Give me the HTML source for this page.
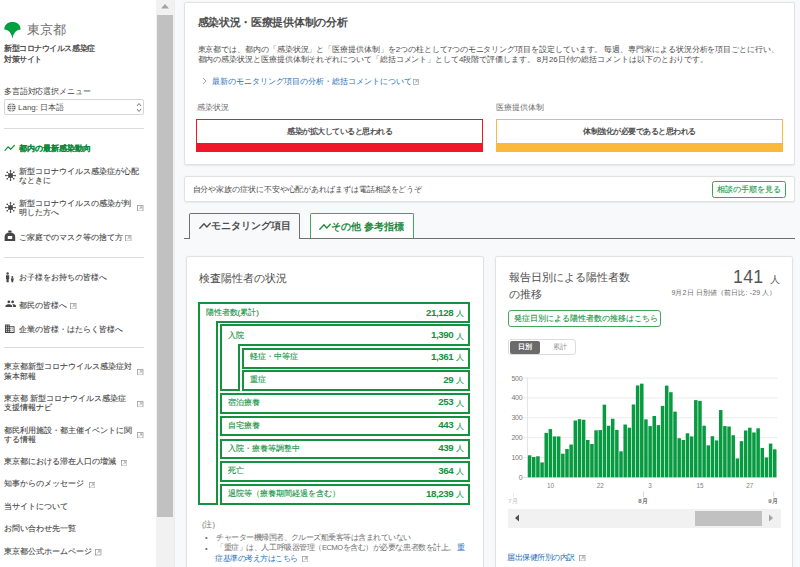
<!DOCTYPE html>
<html lang="ja"><head><meta charset="utf-8"><style>
*{box-sizing:border-box;margin:0;padding:0}
html,body{width:800px;height:567px;overflow:hidden;background:#f8f9fa;font-family:"Liberation Sans",sans-serif;color:#4d4d4d}
.a{position:absolute;white-space:nowrap}
.ic{position:absolute}
.nav{position:absolute;left:19px;font-size:8px;line-height:9px;color:#5f5f5f;white-space:nowrap;-webkit-text-stroke:0.1px currentColor}
.dv{position:absolute;left:4px;width:140px;height:1px;background:#dcdcdc}
.card{position:absolute;background:#fff;border:1px solid #e2e2e2;border-radius:2.5px;box-shadow:0 0.5px 1.5px rgba(0,0,0,.07)}
.bx{position:absolute;border:2px solid #0a8a3a}
.lab{position:absolute;font-size:8px;line-height:10px;color:#14923f;white-space:nowrap;-webkit-text-stroke:0.1px currentColor}
.val{position:absolute;right:0;font-size:9.3px;line-height:10px;color:#0a8a3a;font-weight:bold;white-space:nowrap;text-align:right}
.val span{font-weight:normal;font-size:8px;margin-left:3px}
.bar{position:absolute;background:#089a40}
</style></head><body>
<div class="a" style="left:0;top:0;width:156px;height:567px;background:#fff"></div>
<svg class="ic" style="left:3px;top:21px" width="20" height="19" viewBox="0 0 20 19"><path d="M1.3,8.6 C1.3,3.6 5,1.1 9.5,1.1 C14,1.1 17.6,3.6 17.6,8.6 C14,8.9 11,11 9.5,17.4 C8,11 5,8.9 1.3,8.6 Z" fill="#00a040"/></svg>
<div class="a" style="left:26.8px;top:22px;font-size:13.3px;line-height:16px;color:#707070;letter-spacing:0.3px">東京都</div>
<div class="a" style="left:4px;top:44.2px;font-size:7.6px;line-height:10px;color:#4d4d4d;font-weight:bold;letter-spacing:-0.45px">新型コロナウイルス感染症</div>
<div class="a" style="left:4px;top:54.8px;font-size:7.6px;line-height:10px;color:#4d4d4d;font-weight:bold;letter-spacing:-0.45px">対策サイト</div>
<div class="a" style="left:4px;top:87.2px;font-size:8px;line-height:10px;color:#3d3d3d;letter-spacing:-0.15px">多言語対応選択メニュー</div>
<div class="a" style="left:4px;top:99px;width:140px;height:16px;border:1px solid #d6d6d6;border-radius:2px;background:#fff"></div>
<svg class="ic" style="left:7px;top:103px" width="9" height="9" viewBox="0 0 9 9"><circle cx="4.5" cy="4.5" r="4" fill="#555"/><path d="M0.5,4.5H8.5M1,2.5H8M1,6.5H8M4.5,0.5V8.5" stroke="#fff" stroke-width="0.7"/><ellipse cx="4.5" cy="4.5" rx="1.8" ry="4" fill="none" stroke="#fff" stroke-width="0.7"/></svg>
<div class="a" style="left:18px;top:103px;font-size:8px;line-height:10px;color:#4d4d4d">Lang: 日本語</div>
<svg class="ic" style="left:136px;top:102px" width="6" height="11" viewBox="0 0 6 11"><path d="M1,4 L3,1.5 L5,4 M1,7 L3,9.5 L5,7" fill="none" stroke="#666" stroke-width="0.9"/></svg>
<div class="dv" style="top:128px"></div>
<svg class="ic" style="left:4px;top:144px" width="11" height="8" viewBox="0 0 11 8"><path d="M1,6.3 L4,2.8 L6.6,5.3 L10.3,1.5" fill="none" stroke="#14923f" stroke-width="1.2" stroke-linecap="round" stroke-linejoin="round"/></svg>
<div class="nav" style="left:19px;top:144.1px;line-height:10px;color:#0a8a3a;letter-spacing:0px;font-weight:bold;">都内の最新感染動向</div>
<svg class="ic" style="left:4.6px;top:169.9px" width="11" height="11" viewBox="0 0 11 11"><circle cx="5.5" cy="5.5" r="2.5" fill="#4a4a4a"/><line x1="5.50" y1="3.50" x2="5.50" y2="1.10" stroke="#4a4a4a" stroke-width="0.75"/><circle cx="5.50" cy="0.90" r="0.85" fill="#4a4a4a"/><line x1="6.91" y1="4.09" x2="8.61" y2="2.39" stroke="#4a4a4a" stroke-width="0.75"/><circle cx="8.75" cy="2.25" r="0.85" fill="#4a4a4a"/><line x1="7.50" y1="5.50" x2="9.90" y2="5.50" stroke="#4a4a4a" stroke-width="0.75"/><circle cx="10.10" cy="5.50" r="0.85" fill="#4a4a4a"/><line x1="6.91" y1="6.91" x2="8.61" y2="8.61" stroke="#4a4a4a" stroke-width="0.75"/><circle cx="8.75" cy="8.75" r="0.85" fill="#4a4a4a"/><line x1="5.50" y1="7.50" x2="5.50" y2="9.90" stroke="#4a4a4a" stroke-width="0.75"/><circle cx="5.50" cy="10.10" r="0.85" fill="#4a4a4a"/><line x1="4.09" y1="6.91" x2="2.39" y2="8.61" stroke="#4a4a4a" stroke-width="0.75"/><circle cx="2.25" cy="8.75" r="0.85" fill="#4a4a4a"/><line x1="3.50" y1="5.50" x2="1.10" y2="5.50" stroke="#4a4a4a" stroke-width="0.75"/><circle cx="0.90" cy="5.50" r="0.85" fill="#4a4a4a"/><line x1="4.09" y1="4.09" x2="2.39" y2="2.39" stroke="#4a4a4a" stroke-width="0.75"/><circle cx="2.25" cy="2.25" r="0.85" fill="#4a4a4a"/></svg>
<div class="nav" style="left:19px;top:167.2px;line-height:10px;color:#454545;letter-spacing:0px;">新型コロナウイルス感染症が心配</div>
<div class="nav" style="left:19px;top:176.1px;line-height:10px;color:#454545;letter-spacing:0px;">なときに</div>
<svg class="ic" style="left:4.5px;top:201.7px" width="11" height="11" viewBox="0 0 11 11"><circle cx="5.5" cy="5.5" r="2.5" fill="#4a4a4a"/><line x1="5.50" y1="3.50" x2="5.50" y2="1.10" stroke="#4a4a4a" stroke-width="0.75"/><circle cx="5.50" cy="0.90" r="0.85" fill="#4a4a4a"/><line x1="6.91" y1="4.09" x2="8.61" y2="2.39" stroke="#4a4a4a" stroke-width="0.75"/><circle cx="8.75" cy="2.25" r="0.85" fill="#4a4a4a"/><line x1="7.50" y1="5.50" x2="9.90" y2="5.50" stroke="#4a4a4a" stroke-width="0.75"/><circle cx="10.10" cy="5.50" r="0.85" fill="#4a4a4a"/><line x1="6.91" y1="6.91" x2="8.61" y2="8.61" stroke="#4a4a4a" stroke-width="0.75"/><circle cx="8.75" cy="8.75" r="0.85" fill="#4a4a4a"/><line x1="5.50" y1="7.50" x2="5.50" y2="9.90" stroke="#4a4a4a" stroke-width="0.75"/><circle cx="5.50" cy="10.10" r="0.85" fill="#4a4a4a"/><line x1="4.09" y1="6.91" x2="2.39" y2="8.61" stroke="#4a4a4a" stroke-width="0.75"/><circle cx="2.25" cy="8.75" r="0.85" fill="#4a4a4a"/><line x1="3.50" y1="5.50" x2="1.10" y2="5.50" stroke="#4a4a4a" stroke-width="0.75"/><circle cx="0.90" cy="5.50" r="0.85" fill="#4a4a4a"/><line x1="4.09" y1="4.09" x2="2.39" y2="2.39" stroke="#4a4a4a" stroke-width="0.75"/><circle cx="2.25" cy="2.25" r="0.85" fill="#4a4a4a"/></svg>
<div class="nav" style="left:19px;top:198.8px;line-height:10px;color:#454545;letter-spacing:0px;">新型コロナウイルスの感染が判</div>
<div class="nav" style="left:19px;top:207.8px;line-height:10px;color:#454545;letter-spacing:0px;">明した方へ</div>
<svg class="ic" style="left:137px;top:204.8px" width="6.5" height="6.5" viewBox="0 0 7 7"><rect x="0.55" y="0.55" width="5.9" height="5.9" fill="none" stroke="#a0a0a0" stroke-width="0.9"/><path d="M2.3,4.7 L5,2 M3.1,1.9 H5.1 V3.9" fill="none" stroke="#a0a0a0" stroke-width="0.85"/></svg>
<svg class="ic" style="left:4px;top:230px" width="12" height="12" viewBox="0 0 12 12"><rect x="4.1" y="0.5" width="3.6" height="2" rx="0.9" fill="#454545"/><path d="M0.6,10.9 V7 Q0.6,2.4 5.9,2.4 Q11.2,2.4 11.2,7 V10.9Z" fill="#454545"/><rect x="3.8" y="6" width="4.4" height="3" fill="#fff"/></svg>
<div class="nav" style="left:19px;top:232.5px;line-height:10px;color:#454545;letter-spacing:0px;">ご家庭でのマスク等の捨て方</div>
<svg class="ic" style="left:125px;top:234.8px" width="6.5" height="6.5" viewBox="0 0 7 7"><rect x="0.55" y="0.55" width="5.9" height="5.9" fill="none" stroke="#a0a0a0" stroke-width="0.9"/><path d="M2.3,4.7 L5,2 M3.1,1.9 H5.1 V3.9" fill="none" stroke="#a0a0a0" stroke-width="0.85"/></svg>
<div class="dv" style="top:257px"></div>
<svg class="ic" style="left:5px;top:272px" width="10" height="11" viewBox="0 0 10 11"><circle cx="2.6" cy="1.5" r="1.2" fill="#454545"/><path d="M1,3.2 H4.2 V7 H3.7 V10.3 H1.5 V7 H1Z" fill="#454545"/><circle cx="7.3" cy="5" r="0.95" fill="#454545"/><path d="M6,6.3 H8.6 V8.6 H8.2 V10.3 H6.4 V8.6 H6Z" fill="#454545"/></svg>
<div class="nav" style="left:19px;top:273.4px;line-height:10px;color:#454545;letter-spacing:0px;">お子様をお持ちの皆様へ</div>
<svg class="ic" style="left:4.5px;top:297.8px" width="11.5" height="11.5" viewBox="0 0 24 24"><path d="M16 11c1.66 0 2.99-1.34 2.99-3S17.66 5 16 5c-1.66 0-3 1.34-3 3s1.34 3 3 3zm-8 0c1.66 0 2.99-1.34 2.99-3S9.66 5 8 5C6.34 5 5 6.34 5 8s1.34 3 3 3zm0 2c-2.33 0-7 1.170-7 3.5V19h14v-2.5c0-2.330-4.67-3.5-7-3.5zm8 0c-.29 0-.62.02-.97.05 1.16.84 1.970 1.970 1.970 3.45V19h6v-2.5c0-2.33-4.67-3.5-7-3.5z" fill="#454545"/></svg>
<div class="nav" style="left:19px;top:300.7px;line-height:10px;color:#454545;letter-spacing:0px;">都民の皆様へ</div>
<svg class="ic" style="left:70px;top:302.8px" width="6.5" height="6.5" viewBox="0 0 7 7"><rect x="0.55" y="0.55" width="5.9" height="5.9" fill="none" stroke="#a0a0a0" stroke-width="0.9"/><path d="M2.3,4.7 L5,2 M3.1,1.9 H5.1 V3.9" fill="none" stroke="#a0a0a0" stroke-width="0.85"/></svg>
<svg class="ic" style="left:4px;top:322.6px" width="11.5" height="11.5" viewBox="0 0 24 24"><path d="M12 7V3H2v18h20V7H12zM6 19H4v-2h2v2zm0-4H4v-2h2v2zm0-4H4V9h2v2zm0-4H4V5h2v2zm4 12H8v-2h2v2zm0-4H8v-2h2v2zm0-4H8V9h2v2zm0-4H8V5h2v2zm10 12h-8v-2h2v-2h-2v-2h2v-2h-2V9h8v10zm-2-8h-2v2h2v-2zm0 4h-2v2h2v-2z" fill="#454545"/></svg>
<div class="nav" style="left:19px;top:325.3px;line-height:10px;color:#454545;letter-spacing:0px;">企業の皆様・はたらく皆様へ</div>
<div class="dv" style="top:347px"></div>
<div class="nav" style="left:4px;top:362.0px;line-height:10px;color:#454545;letter-spacing:0px;">東京都新型コロナウイルス感染症対</div>
<div class="nav" style="left:4px;top:371.5px;line-height:10px;color:#454545;letter-spacing:0px;">策本部報</div>
<svg class="ic" style="left:137px;top:368.8px" width="6.5" height="6.5" viewBox="0 0 7 7"><rect x="0.55" y="0.55" width="5.9" height="5.9" fill="none" stroke="#a0a0a0" stroke-width="0.9"/><path d="M2.3,4.7 L5,2 M3.1,1.9 H5.1 V3.9" fill="none" stroke="#a0a0a0" stroke-width="0.85"/></svg>
<div class="nav" style="left:4px;top:393.8px;line-height:10px;color:#454545;letter-spacing:0px;">東京都 新型コロナウイルス感染症</div>
<div class="nav" style="left:4px;top:403.3px;line-height:10px;color:#454545;letter-spacing:0px;">支援情報ナビ</div>
<svg class="ic" style="left:137px;top:400.8px" width="6.5" height="6.5" viewBox="0 0 7 7"><rect x="0.55" y="0.55" width="5.9" height="5.9" fill="none" stroke="#a0a0a0" stroke-width="0.9"/><path d="M2.3,4.7 L5,2 M3.1,1.9 H5.1 V3.9" fill="none" stroke="#a0a0a0" stroke-width="0.85"/></svg>
<div class="nav" style="left:4px;top:425.6px;line-height:10px;color:#454545;letter-spacing:0px;">都民利用施設・都主催イベントに関</div>
<div class="nav" style="left:4px;top:435.0px;line-height:10px;color:#454545;letter-spacing:0px;">する情報</div>
<svg class="ic" style="left:137px;top:431.8px" width="6.5" height="6.5" viewBox="0 0 7 7"><rect x="0.55" y="0.55" width="5.9" height="5.9" fill="none" stroke="#a0a0a0" stroke-width="0.9"/><path d="M2.3,4.7 L5,2 M3.1,1.9 H5.1 V3.9" fill="none" stroke="#a0a0a0" stroke-width="0.85"/></svg>
<div class="nav" style="left:4px;top:456.9px;line-height:10px;color:#454545;letter-spacing:0px;">東京都における滞在人口の増減</div>
<svg class="ic" style="left:120.5px;top:459.8px" width="6.5" height="6.5" viewBox="0 0 7 7"><rect x="0.55" y="0.55" width="5.9" height="5.9" fill="none" stroke="#a0a0a0" stroke-width="0.9"/><path d="M2.3,4.7 L5,2 M3.1,1.9 H5.1 V3.9" fill="none" stroke="#a0a0a0" stroke-width="0.85"/></svg>
<div class="nav" style="left:4px;top:479.4px;line-height:10px;color:#454545;letter-spacing:0px;">知事からのメッセージ</div>
<svg class="ic" style="left:88.5px;top:481.8px" width="6.5" height="6.5" viewBox="0 0 7 7"><rect x="0.55" y="0.55" width="5.9" height="5.9" fill="none" stroke="#a0a0a0" stroke-width="0.9"/><path d="M2.3,4.7 L5,2 M3.1,1.9 H5.1 V3.9" fill="none" stroke="#a0a0a0" stroke-width="0.85"/></svg>
<div class="nav" style="left:4px;top:501.5px;line-height:10px;color:#454545;letter-spacing:0px;">当サイトについて</div>
<div class="nav" style="left:4px;top:524.3px;line-height:10px;color:#454545;letter-spacing:0px;">お問い合わせ先一覧</div>
<div class="nav" style="left:4px;top:547.4px;line-height:10px;color:#454545;letter-spacing:0px;">東京都公式ホームページ</div>
<svg class="ic" style="left:95px;top:549.3px" width="6.5" height="6.5" viewBox="0 0 7 7"><rect x="0.55" y="0.55" width="5.9" height="5.9" fill="none" stroke="#a0a0a0" stroke-width="0.9"/><path d="M2.3,4.7 L5,2 M3.1,1.9 H5.1 V3.9" fill="none" stroke="#a0a0a0" stroke-width="0.85"/></svg>
<div class="a" style="left:156px;top:0;width:18px;height:567px;background:#f1f1f1"></div>
<svg class="ic" style="left:160px;top:3px" width="10" height="6" viewBox="0 0 10 6"><path d="M1,5.5 L5,1 L9,5.5Z" fill="#a3a3a3"/></svg>
<div class="a" style="left:157px;top:15px;width:16px;height:502px;background:#c1c1c1"></div>
<div class="a" style="left:174px;top:0;width:1px;height:567px;background:#ececec"></div>
<div class="card" style="left:184px;top:2px;width:611px;height:163px"></div>
<div class="a" style="left:197.5px;top:15.5px;font-size:10.7px;line-height:12px;color:#4d4d4d;font-weight:bold;letter-spacing:-0.3px">感染状況・医療提供体制の分析</div>
<div class="a" style="left:197.5px;top:45px;font-size:7.88px;line-height:10.1px;color:#4d4d4d;letter-spacing:-0.075px">東京都では、都内の「感染状況」と「医療提供体制」を2つの柱として7つのモニタリング項目を設定しています。 毎週、専門家による状況分析を項目ごとに行い、<br>都内の感染状況と医療提供体制それぞれについて「総括コメント」として4段階で評価します。 8月26日付の総括コメントは以下のとおりです。</div>
<svg class="ic" style="left:202px;top:77px" width="5" height="8" viewBox="0 0 5 8"><path d="M1,1 L4,4 L1,7" fill="none" stroke="#9a9a9a" stroke-width="0.9"/></svg>
<div class="a" style="left:212.4px;top:77px;font-size:8px;line-height:10px;color:#1d6fb8">最新のモニタリング項目の分析・総括コメントについて</div>
<svg class="ic" style="left:413px;top:79.39999999999999px" width="5.8" height="5.8" viewBox="0 0 7 7"><rect x="0.55" y="0.55" width="5.9" height="5.9" fill="none" stroke="#a0a0a0" stroke-width="0.9"/><path d="M2.3,4.7 L5,2 M3.1,1.9 H5.1 V3.9" fill="none" stroke="#a0a0a0" stroke-width="0.85"/></svg>
<div class="a" style="left:197px;top:103px;font-size:7.8px;line-height:10px;color:#6b6b6b">感染状況</div>
<div class="a" style="left:496px;top:103px;font-size:7.8px;line-height:10px;color:#6b6b6b">医療提供体制</div>
<div class="a" style="left:196px;top:119px;width:287px;height:33px;border:1px solid #f01828;background:#fff"></div>
<div class="a" style="left:196px;top:142.5px;width:287px;height:9px;background:#f01828"></div>
<div class="a" style="left:196px;top:127px;width:287px;text-align:center;font-size:7.5px;line-height:10px;color:#4d4d4d;font-weight:bold;letter-spacing:-0.5px">感染が拡大していると思われる</div>
<div class="a" style="left:496px;top:119px;width:287px;height:33px;border:1px solid #fbb93c;background:#fff"></div>
<div class="a" style="left:496px;top:142.5px;width:287px;height:9px;background:#fbb93c"></div>
<div class="a" style="left:496px;top:127px;width:287px;text-align:center;font-size:7.5px;line-height:10px;color:#4d4d4d;font-weight:bold;letter-spacing:-0.5px">体制強化が必要であると思われる</div>
<div class="card" style="left:184px;top:176px;width:611px;height:26px"></div>
<div class="a" style="left:192.5px;top:185px;font-size:7.8px;line-height:10px;color:#4d4d4d;letter-spacing:-0.08px">自分や家族の症状に不安や心配があればまずは電話相談をどうぞ</div>
<div class="a" style="left:712px;top:181px;width:74px;height:17px;border:1px solid #3aa35a;border-radius:2.5px;background:#fff"></div>
<div class="a" style="left:712px;top:184.5px;width:74px;text-align:center;font-size:7.5px;line-height:10px;color:#209a4a;-webkit-text-stroke:0.1px currentColor">相談の手順を見る</div>
<div class="a" style="left:184px;top:237.5px;width:611px;height:1px;background:#707070"></div>
<div class="a" style="left:189px;top:212.5px;width:111px;height:26px;border:1px solid #707070;border-bottom:none;border-radius:2px 2px 0 0;background:#f8f9fa"></div>
<svg class="ic" style="left:199px;top:221.5px" width="12" height="8" viewBox="0 0 12 8"><path d="M0.8,6.2 L5,1.8 L7.8,5 L11.3,1.3" fill="none" stroke="#4d4d4d" stroke-width="1.3" stroke-linecap="round" stroke-linejoin="round"/></svg>
<div class="a" style="left:211px;top:219.5px;font-size:9.6px;line-height:12px;color:#4d4d4d;font-weight:bold">モニタリング項目</div>
<div class="a" style="left:309.5px;top:212.5px;width:104px;height:25px;border:1px solid #43a560;border-bottom:none;border-radius:2px 2px 0 0;background:#fff"></div>
<svg class="ic" style="left:319px;top:222.5px" width="12" height="8" viewBox="0 0 12 8"><path d="M0.8,6.2 L5,1.8 L7.8,5 L11.3,1.3" fill="none" stroke="#1a8a40" stroke-width="1.3" stroke-linecap="round" stroke-linejoin="round"/></svg>
<div class="a" style="left:331px;top:220.5px;font-size:9.6px;line-height:12px;color:#1a8a40;font-weight:bold">その他 参考指標</div>
<div class="card" style="left:186px;top:256px;width:298px;height:330px"></div>
<div class="a" style="left:198.5px;top:271.8px;font-size:11.2px;line-height:13px;color:#4d4d4d">検査陽性者の状況</div>
<div class="a" style="left:198px;top:302px;width:20px;height:203px;border-top:none;border-left:2px solid #14923f;border-right:none;border-bottom:2px solid #14923f;"></div>
<div class="a" style="left:216px;top:321px;width:254px;height:184px;border-top:2px solid #14923f;border-left:2px solid #14923f;border-right:none;border-bottom:none;"></div>
<div class="a" style="left:220px;top:324px;width:20px;height:67px;border-top:none;border-left:2px solid #14923f;border-right:none;border-bottom:2px solid #14923f;"></div>
<div class="a" style="left:238px;top:344px;width:232px;height:47px;border-top:2px solid #14923f;border-left:2px solid #14923f;border-right:none;border-bottom:none;"></div>
<div class="a" style="left:198px;top:302px;width:272px;height:21px;border-top:2px solid #14923f;border-left:2px solid #14923f;border-right:2px solid #14923f;border-bottom:none;"></div>
<div class="lab" style="left:205.5px;top:308.0px">陽性者数(累計)</div>
<div class="a" style="left:300px;width:153.2px;top:307.5px;text-align:right;font-size:9.7px;line-height:10px;color:#14923f;font-weight:bold;letter-spacing:-0.4px">21,128</div>
<div class="a" style="left:455.5px;top:308.6px;font-size:8px;line-height:10px;color:#14923f">人</div>
<div class="a" style="left:220px;top:324px;width:250px;height:22px;border-top:2px solid #14923f;border-left:2px solid #14923f;border-right:2px solid #14923f;border-bottom:none;"></div>
<div class="lab" style="left:227.5px;top:330.9px">入院</div>
<div class="a" style="left:300px;width:153.2px;top:330.4px;text-align:right;font-size:9.7px;line-height:10px;color:#14923f;font-weight:bold;letter-spacing:-0.4px">1,390</div>
<div class="a" style="left:455.5px;top:331.5px;font-size:8px;line-height:10px;color:#14923f">人</div>
<div class="a" style="left:242px;top:348px;width:228px;height:21px;border-top:2px solid #14923f;border-left:2px solid #14923f;border-right:2px solid #14923f;border-bottom:2px solid #14923f;"></div>
<div class="lab" style="left:249.5px;top:352.4px">軽症・中等症</div>
<div class="a" style="left:300px;width:153.2px;top:351.9px;text-align:right;font-size:9.7px;line-height:10px;color:#14923f;font-weight:bold;letter-spacing:-0.4px">1,361</div>
<div class="a" style="left:455.5px;top:353.0px;font-size:8px;line-height:10px;color:#14923f">人</div>
<div class="a" style="left:242px;top:370px;width:228px;height:21px;border-top:2px solid #14923f;border-left:2px solid #14923f;border-right:2px solid #14923f;border-bottom:2px solid #14923f;"></div>
<div class="lab" style="left:249.5px;top:375.3px">重症</div>
<div class="a" style="left:300px;width:153.2px;top:374.8px;text-align:right;font-size:9.7px;line-height:10px;color:#14923f;font-weight:bold;letter-spacing:-0.4px">29</div>
<div class="a" style="left:455.5px;top:375.9px;font-size:8px;line-height:10px;color:#14923f">人</div>
<div class="a" style="left:220px;top:393px;width:250px;height:21px;border-top:2px solid #14923f;border-left:2px solid #14923f;border-right:2px solid #14923f;border-bottom:2px solid #14923f;"></div>
<div class="lab" style="left:227.5px;top:397.9px">宿泊療養</div>
<div class="a" style="left:300px;width:153.2px;top:397.4px;text-align:right;font-size:9.7px;line-height:10px;color:#14923f;font-weight:bold;letter-spacing:-0.4px">253</div>
<div class="a" style="left:455.5px;top:398.5px;font-size:8px;line-height:10px;color:#14923f">人</div>
<div class="a" style="left:220px;top:416px;width:250px;height:20px;border-top:2px solid #14923f;border-left:2px solid #14923f;border-right:2px solid #14923f;border-bottom:2px solid #14923f;"></div>
<div class="lab" style="left:227.5px;top:420.9px">自宅療養</div>
<div class="a" style="left:300px;width:153.2px;top:420.4px;text-align:right;font-size:9.7px;line-height:10px;color:#14923f;font-weight:bold;letter-spacing:-0.4px">443</div>
<div class="a" style="left:455.5px;top:421.5px;font-size:8px;line-height:10px;color:#14923f">人</div>
<div class="a" style="left:220px;top:439px;width:250px;height:20px;border-top:2px solid #14923f;border-left:2px solid #14923f;border-right:2px solid #14923f;border-bottom:2px solid #14923f;"></div>
<div class="lab" style="left:227.5px;top:443.8px">入院・療養等調整中</div>
<div class="a" style="left:300px;width:153.2px;top:443.3px;text-align:right;font-size:9.7px;line-height:10px;color:#14923f;font-weight:bold;letter-spacing:-0.4px">439</div>
<div class="a" style="left:455.5px;top:444.4px;font-size:8px;line-height:10px;color:#14923f">人</div>
<div class="a" style="left:220px;top:461px;width:250px;height:21px;border-top:2px solid #14923f;border-left:2px solid #14923f;border-right:2px solid #14923f;border-bottom:2px solid #14923f;"></div>
<div class="lab" style="left:227.5px;top:466.4px">死亡</div>
<div class="a" style="left:300px;width:153.2px;top:465.9px;text-align:right;font-size:9.7px;line-height:10px;color:#14923f;font-weight:bold;letter-spacing:-0.4px">364</div>
<div class="a" style="left:455.5px;top:467.0px;font-size:8px;line-height:10px;color:#14923f">人</div>
<div class="a" style="left:220px;top:484px;width:250px;height:21px;border-top:2px solid #14923f;border-left:2px solid #14923f;border-right:2px solid #14923f;border-bottom:2px solid #14923f;"></div>
<div class="lab" style="left:227.5px;top:489.4px">退院等（療養期間経過を含む）</div>
<div class="a" style="left:300px;width:153.2px;top:488.9px;text-align:right;font-size:9.7px;line-height:10px;color:#14923f;font-weight:bold;letter-spacing:-0.4px">18,239</div>
<div class="a" style="left:455.5px;top:490.0px;font-size:8px;line-height:10px;color:#14923f">人</div>
<div class="a" style="left:202px;top:519.5px;font-size:7.5px;line-height:10px;color:#707070">(注)</div>
<div class="a" style="left:205px;top:532px;font-size:7.5px;line-height:11px;color:#707070">•<br>•</div>
<div class="a" style="left:216.2px;top:532px;font-size:7.5px;line-height:11px;color:#707070;letter-spacing:-0.52px">チャーター機帰国者、クルーズ船乗客等は含まれていない</div>
<div class="a" style="left:216.2px;top:541.5px;font-size:7.5px;line-height:11px;color:#707070;letter-spacing:-0.45px">「重症」は、人工呼吸器管理（ECMOを含む）が必要な患者数を計上。 <span style="color:#1d6fb8">重</span></div>
<div class="a" style="left:215.4px;top:552.7px;font-size:7.5px;line-height:11px;color:#1d6fb8;letter-spacing:-0.54px">症基準の考え方はこちら</div>
<svg class="ic" style="left:301.5px;top:555.8px" width="6.5" height="6.5" viewBox="0 0 7 7"><rect x="0.55" y="0.55" width="5.9" height="5.9" fill="none" stroke="#a0a0a0" stroke-width="0.9"/><path d="M2.3,4.7 L5,2 M3.1,1.9 H5.1 V3.9" fill="none" stroke="#a0a0a0" stroke-width="0.85"/></svg>
<div class="card" style="left:495px;top:256px;width:298px;height:330px"></div>
<div class="a" style="left:508.5px;top:268.6px;font-size:11.2px;line-height:17px;color:#4d4d4d">報告日別による陽性者数<br>の推移</div>
<div class="a" style="left:700px;width:63.5px;top:266.8px;text-align:right;font-size:17.7px;line-height:20px;color:#555;letter-spacing:0.3px">141</div>
<div class="a" style="left:770px;top:273.5px;font-size:9.6px;line-height:12px;color:#5a5a5a">人</div>
<div class="a" style="left:600px;width:176.5px;top:288px;text-align:right;font-size:7px;line-height:9px;color:#6a6a6a;letter-spacing:0.12px">9月2日 日別値（前日比: -29 人）</div>
<div class="a" style="left:508px;top:310px;width:153px;height:17px;border:1px solid #43a560;border-radius:3px;background:#fff"></div>
<div class="a" style="left:513.5px;top:314.3px;font-size:7.8px;line-height:10px;color:#159541;-webkit-text-stroke:0.1px currentColor">発症日別による陽性者数の推移はこちら</div>
<div class="a" style="left:508px;top:339px;width:68px;height:16px;border:1px solid #dcdcdc;border-radius:3px;background:#fff"></div>
<div class="a" style="left:510px;top:341px;width:30px;height:12.5px;border-radius:2px;background:#6b6b6b"></div>
<div class="a" style="left:510px;top:342px;width:30px;text-align:center;font-size:7.3px;line-height:10px;color:#fff;font-weight:bold">日別</div>
<div class="a" style="left:545px;top:342px;width:30px;text-align:center;font-size:7.3px;line-height:10px;color:#8a8a8a">累計</div>
<svg class="ic" style="left:0;top:0" width="800" height="567" viewBox="0 0 800 567"><rect x="522.5" y="456.96" width="255" height="1" fill="#ebebeb"/><rect x="522.5" y="437.12" width="255" height="1" fill="#ebebeb"/><rect x="522.5" y="417.28" width="255" height="1" fill="#ebebeb"/><rect x="522.5" y="397.44" width="255" height="1" fill="#ebebeb"/><rect x="522.5" y="377.60" width="255" height="1" fill="#ebebeb"/><rect x="522.5" y="476.80" width="255" height="1" fill="#dedede"/><rect x="527" y="377.8" width="1" height="100" fill="#e6e6e6"/><rect x="527.85" y="455.28" width="3.5" height="22.02" fill="#089a40"/><rect x="532.00" y="457.06" width="3.5" height="20.24" fill="#089a40"/><rect x="536.16" y="456.27" width="3.5" height="21.03" fill="#089a40"/><rect x="540.32" y="462.42" width="3.5" height="14.88" fill="#089a40"/><rect x="544.47" y="432.86" width="3.5" height="44.44" fill="#089a40"/><rect x="548.62" y="429.09" width="3.5" height="48.21" fill="#089a40"/><rect x="552.78" y="436.43" width="3.5" height="40.87" fill="#089a40"/><rect x="556.94" y="436.43" width="3.5" height="40.87" fill="#089a40"/><rect x="561.09" y="453.69" width="3.5" height="23.61" fill="#089a40"/><rect x="565.25" y="448.93" width="3.5" height="28.37" fill="#089a40"/><rect x="569.40" y="444.56" width="3.5" height="32.74" fill="#089a40"/><rect x="573.56" y="420.56" width="3.5" height="56.74" fill="#089a40"/><rect x="577.71" y="419.17" width="3.5" height="58.13" fill="#089a40"/><rect x="581.87" y="419.76" width="3.5" height="57.54" fill="#089a40"/><rect x="586.02" y="440.00" width="3.5" height="37.30" fill="#089a40"/><rect x="590.18" y="443.97" width="3.5" height="33.33" fill="#089a40"/><rect x="594.33" y="430.28" width="3.5" height="47.02" fill="#089a40"/><rect x="598.49" y="430.08" width="3.5" height="47.22" fill="#089a40"/><rect x="602.64" y="404.69" width="3.5" height="72.61" fill="#089a40"/><rect x="606.80" y="425.72" width="3.5" height="51.58" fill="#089a40"/><rect x="610.95" y="418.77" width="3.5" height="58.53" fill="#089a40"/><rect x="615.11" y="429.88" width="3.5" height="47.42" fill="#089a40"/><rect x="619.26" y="451.31" width="3.5" height="25.99" fill="#089a40"/><rect x="623.42" y="424.53" width="3.5" height="52.77" fill="#089a40"/><rect x="627.57" y="427.70" width="3.5" height="49.60" fill="#089a40"/><rect x="631.73" y="404.49" width="3.5" height="72.81" fill="#089a40"/><rect x="635.88" y="385.44" width="3.5" height="91.86" fill="#089a40"/><rect x="640.04" y="383.66" width="3.5" height="93.64" fill="#089a40"/><rect x="644.19" y="419.37" width="3.5" height="57.93" fill="#089a40"/><rect x="648.35" y="426.11" width="3.5" height="51.19" fill="#089a40"/><rect x="652.50" y="415.99" width="3.5" height="61.31" fill="#089a40"/><rect x="656.65" y="425.12" width="3.5" height="52.18" fill="#089a40"/><rect x="660.81" y="405.88" width="3.5" height="71.42" fill="#089a40"/><rect x="664.97" y="385.64" width="3.5" height="91.66" fill="#089a40"/><rect x="669.12" y="392.19" width="3.5" height="85.11" fill="#089a40"/><rect x="673.28" y="411.63" width="3.5" height="65.67" fill="#089a40"/><rect x="677.43" y="438.22" width="3.5" height="39.08" fill="#089a40"/><rect x="681.59" y="440.00" width="3.5" height="37.30" fill="#089a40"/><rect x="685.74" y="433.26" width="3.5" height="44.04" fill="#089a40"/><rect x="689.89" y="436.43" width="3.5" height="40.87" fill="#089a40"/><rect x="694.05" y="400.12" width="3.5" height="77.18" fill="#089a40"/><rect x="698.21" y="400.92" width="3.5" height="76.38" fill="#089a40"/><rect x="702.36" y="425.72" width="3.5" height="51.58" fill="#089a40"/><rect x="706.52" y="445.36" width="3.5" height="31.94" fill="#089a40"/><rect x="710.67" y="436.23" width="3.5" height="41.07" fill="#089a40"/><rect x="714.83" y="440.40" width="3.5" height="36.90" fill="#089a40"/><rect x="718.98" y="410.04" width="3.5" height="67.26" fill="#089a40"/><rect x="723.13" y="426.11" width="3.5" height="51.19" fill="#089a40"/><rect x="727.29" y="426.51" width="3.5" height="50.79" fill="#089a40"/><rect x="731.45" y="435.24" width="3.5" height="42.06" fill="#089a40"/><rect x="735.60" y="458.45" width="3.5" height="18.85" fill="#089a40"/><rect x="739.75" y="441.19" width="3.5" height="36.11" fill="#089a40"/><rect x="743.91" y="430.48" width="3.5" height="46.82" fill="#089a40"/><rect x="748.07" y="427.70" width="3.5" height="49.60" fill="#089a40"/><rect x="752.22" y="432.46" width="3.5" height="44.84" fill="#089a40"/><rect x="756.38" y="428.30" width="3.5" height="49.00" fill="#089a40"/><rect x="760.53" y="447.94" width="3.5" height="29.36" fill="#089a40"/><rect x="764.69" y="457.46" width="3.5" height="19.84" fill="#089a40"/><rect x="768.84" y="443.57" width="3.5" height="33.73" fill="#089a40"/><rect x="773.00" y="449.33" width="3.5" height="27.97" fill="#089a40"/><rect x="513" y="491.5" width="0.8" height="5.5" fill="#e6e6e6"/><rect x="643.2" y="491.5" width="0.8" height="5.5" fill="#cfcfcf"/><rect x="773.4" y="491.5" width="0.8" height="5.5" fill="#cfcfcf"/></svg>
<div class="a" style="left:490px;width:32.5px;top:472.80px;text-align:right;font-size:7px;line-height:9px;color:#7a7a7a;letter-spacing:-0.2px">0</div>
<div class="a" style="left:490px;width:32.5px;top:452.96px;text-align:right;font-size:7px;line-height:9px;color:#7a7a7a;letter-spacing:-0.2px">100</div>
<div class="a" style="left:490px;width:32.5px;top:433.12px;text-align:right;font-size:7px;line-height:9px;color:#7a7a7a;letter-spacing:-0.2px">200</div>
<div class="a" style="left:490px;width:32.5px;top:413.28px;text-align:right;font-size:7px;line-height:9px;color:#7a7a7a;letter-spacing:-0.2px">300</div>
<div class="a" style="left:490px;width:32.5px;top:393.44px;text-align:right;font-size:7px;line-height:9px;color:#7a7a7a;letter-spacing:-0.2px">400</div>
<div class="a" style="left:490px;width:32.5px;top:373.60px;text-align:right;font-size:7px;line-height:9px;color:#7a7a7a;letter-spacing:-0.2px">500</div>
<div class="a" style="left:540.4px;width:20px;top:481.5px;text-align:center;font-size:6.3px;line-height:8px;color:#808080">10</div>
<div class="a" style="left:590.2px;width:20px;top:481.5px;text-align:center;font-size:6.3px;line-height:8px;color:#808080">22</div>
<div class="a" style="left:640.1px;width:20px;top:481.5px;text-align:center;font-size:6.3px;line-height:8px;color:#808080">3</div>
<div class="a" style="left:690.0px;width:20px;top:481.5px;text-align:center;font-size:6.3px;line-height:8px;color:#808080">15</div>
<div class="a" style="left:739.8px;width:20px;top:481.5px;text-align:center;font-size:6.3px;line-height:8px;color:#808080">27</div>
<div class="a" style="left:503px;width:20px;top:497px;text-align:center;font-size:6px;line-height:8px;color:#d0d0d0;font-weight:bold">7月</div>
<div class="a" style="left:633px;width:20px;top:497px;text-align:center;font-size:6px;line-height:8px;color:#707070;font-weight:bold">8月</div>
<div class="a" style="left:763px;width:20px;top:497px;text-align:center;font-size:6px;line-height:8px;color:#707070;font-weight:bold">9月</div>
<div class="a" style="left:508px;top:509px;width:272.5px;height:18.5px;background:#f1f1f1"></div>
<svg class="ic" style="left:514px;top:514px" width="6" height="8" viewBox="0 0 6 8"><path d="M5,0.5 L1,4 L5,7.5Z" fill="#505050"/></svg>
<div class="a" style="left:695px;top:510.5px;width:67px;height:15.5px;background:#c1c1c1"></div>
<svg class="ic" style="left:768px;top:514px" width="6" height="8" viewBox="0 0 6 8"><path d="M1,0.5 L5,4 L1,7.5Z" fill="#a3a3a3"/></svg>
<div class="a" style="left:507.4px;top:553px;font-size:7.5px;line-height:10px;color:#1d6fb8;letter-spacing:-0.5px">届出保健所別の内訳</div>
<svg class="ic" style="left:579px;top:554.8px" width="6.5" height="6.5" viewBox="0 0 7 7"><rect x="0.55" y="0.55" width="5.9" height="5.9" fill="none" stroke="#a0a0a0" stroke-width="0.9"/><path d="M2.3,4.7 L5,2 M3.1,1.9 H5.1 V3.9" fill="none" stroke="#a0a0a0" stroke-width="0.85"/></svg>
</body></html>
